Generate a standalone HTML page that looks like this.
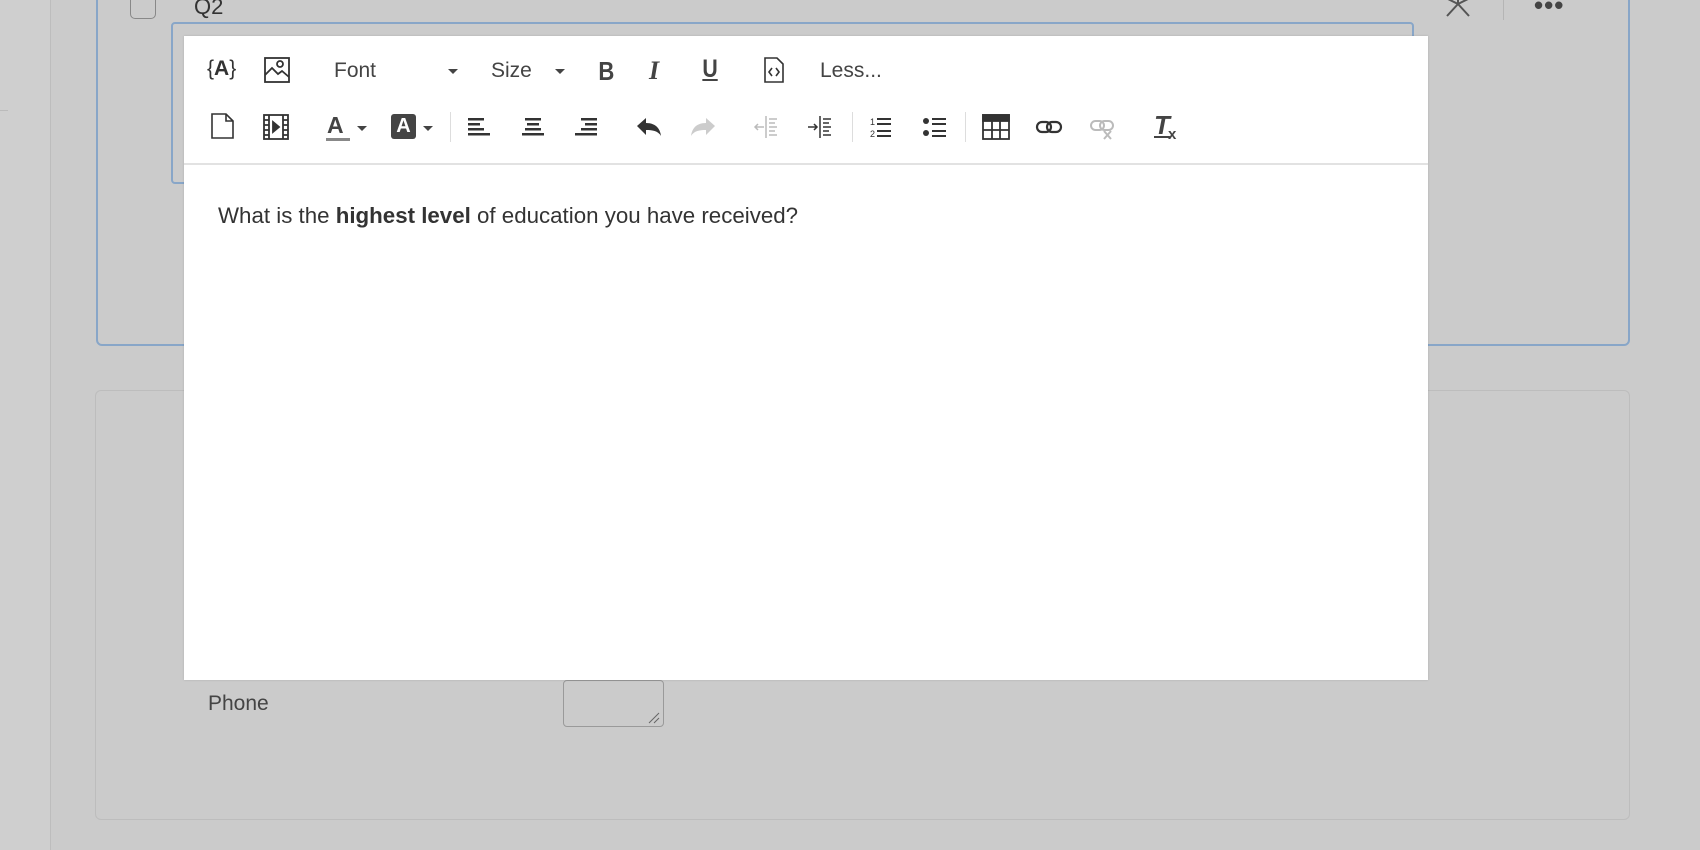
<!DOCTYPE html>
<html><head><meta charset="utf-8"><style>
*{margin:0;padding:0;box-sizing:border-box}
body{width:1700px;height:850px;overflow:hidden;background:#cbcbcb;font-family:"Liberation Sans",Arial,sans-serif;position:relative;color:#333}
.a{position:absolute}
.ic{position:absolute;width:28px;height:28px}
.t{position:absolute;font-size:20px;color:#444}
.car{position:absolute;width:0;height:0;border-left:5px solid transparent;border-right:5px solid transparent;border-top:5px solid #444}
.sep{position:absolute;width:1px;height:30px;background:#ddd;top:112px}
</style></head><body>
<div class="a" style="left:0;top:0;width:51px;height:850px;background:#cfcfcf;border-right:1px solid #bdbdbd"></div>
<div class="a" style="left:0;top:110px;width:8px;height:1px;background:#bbb"></div>
<!-- card 1 -->
<div class="a" style="left:96px;top:-10px;width:1534px;height:356px;border:2px solid #88a6c8;border-radius:6px;background:#cbcbcb"></div>
<div class="a" style="left:130px;top:-8px;width:26px;height:27px;border:1.5px solid #888;border-radius:5px"></div>
<div class="a" style="left:194px;top:-6px;font-size:22px;color:#333">Q2</div>
<svg class="a" style="left:1443px;top:-10px" width="30" height="28" viewBox="0 0 30 28" stroke="#555" stroke-width="2" fill="none"><path d="M15 0v14M15 14L4 26M15 14l11 12M15 14L3 8M15 14l12-6"/></svg>
<div class="a" style="left:1503px;top:0;width:1px;height:20px;background:#b5b5b5"></div>
<div class="a" style="left:1534px;top:-10px;font-size:26px;color:#444;letter-spacing:1px;font-weight:bold">•••</div>
<div class="a" style="left:171px;top:22px;width:1243px;height:162px;border:2px solid #88a6c8;border-radius:4px"></div>
<!-- card 2 -->
<div class="a" style="left:95px;top:390px;width:1535px;height:430px;border:1px solid #bdbdbd;border-radius:6px"></div>
<div class="a" style="left:208px;top:692px;font-size:21px;color:#444">Phone</div>
<div class="a" style="left:563px;top:680px;width:101px;height:47px;border:1px solid #9a9a9a;border-radius:4px"></div>
<svg class="a" style="left:648px;top:712px" width="12" height="12" stroke="#666" stroke-width="1"><path d="M1 11L11 1M6 11l5-5"/></svg>
<!-- editor -->
<div class="a" style="left:184px;top:36px;width:1244px;height:644px;background:#fff;box-shadow:0 0 2px rgba(0,0,0,.15)"></div>
<div class="a" style="left:184px;top:163px;width:1244px;height:2px;background:#e2e2e2"></div>
<div class="a" style="left:218px;top:203px;font-size:22.3px;color:#333">What is the <b>highest level</b> of education you have received?</div>
<!-- row1 -->
<div class="t" style="left:207px;top:57px;font-size:21px;color:#333">{<b>A</b>}</div>
<svg class="ic" style="left:263px;top:56px" viewBox="0 0 28 28" fill="none" stroke="#333" stroke-width="1.8"><rect x="2" y="2" width="24" height="24"/><path d="M2 19l7-7 6 6 4-3 7 6"/><circle cx="17" cy="8" r="3"/></svg>
<div class="t" style="left:334px;top:59px;font-size:21px">Font</div><div class="car" style="left:448px;top:69px"></div>
<div class="t" style="left:491px;top:59px;font-size:21px">Size</div><div class="car" style="left:555px;top:69px"></div>
<div class="t" style="left:597px;top:56px;font-size:26px;font-weight:bold;color:#444;transform:scaleX(.85)">B</div>
<div class="t" style="left:649px;top:56px;font-size:26px;font-weight:bold;font-style:italic;font-family:'Liberation Serif',serif;color:#444">I</div>
<div class="t" style="left:701px;top:55px;font-size:25px;font-weight:bold;text-decoration:underline;color:#444;transform:scaleX(.85)">U</div>
<svg class="ic" style="left:760px;top:56px" viewBox="0 0 28 28" fill="none" stroke="#333" stroke-width="1.6"><path d="M5 2h12l6 6v18H5z"/><path d="M12 12l-3 4 3 4M16 12l3 4-3 4"/></svg>
<div class="t" style="left:820px;top:59px;font-size:21px">Less...</div>
<!-- row2 -->
<svg class="ic" style="left:209px;top:112px" viewBox="0 0 28 28" fill="none" stroke="#333" stroke-width="1.6"><path d="M3 2h14l7 7v17H3z"/><path d="M17 2v7h7"/></svg>
<svg class="ic" style="left:262px;top:113px" viewBox="0 0 28 28" fill="none" stroke="#333" stroke-width="1.8"><rect x="2" y="2" width="24" height="24"/><path d="M7 2v24M21 2v24M2 7h5M2 12h5M2 17h5M2 22h5M21 7h5M21 12h5M21 17h5M21 22h5"/><path d="M11 9l6 5-6 5z" fill="#333"/></svg>
<div class="t" style="left:327px;top:112px;font-size:23px;font-weight:bold">A</div>
<div class="a" style="left:326px;top:138px;width:24px;height:3px;background:#888"></div>
<div class="car" style="left:357px;top:126px"></div>
<div class="a" style="left:391px;top:114px;width:25px;height:25px;background:#444;border-radius:3px;color:#fff;font-weight:bold;font-size:20px;text-align:center;line-height:25px">A</div>
<div class="car" style="left:423px;top:126px"></div>
<div class="sep" style="left:450px"></div>
<svg class="ic" style="left:465px;top:113px" viewBox="0 0 28 28" fill="#333"><rect x="3" y="5" width="16" height="2.5"/><rect x="3" y="10" width="12" height="2.5"/><rect x="3" y="15" width="16" height="2.5"/><rect x="3" y="20" width="22" height="2.5"/></svg>
<svg class="ic" style="left:519px;top:113px" viewBox="0 0 28 28" fill="#333"><rect x="6" y="5" width="16" height="2.5"/><rect x="8" y="10" width="12" height="2.5"/><rect x="6" y="15" width="16" height="2.5"/><rect x="3" y="20" width="22" height="2.5"/></svg>
<svg class="ic" style="left:572px;top:113px" viewBox="0 0 28 28" fill="#333"><rect x="9" y="5" width="16" height="2.5"/><rect x="13" y="10" width="12" height="2.5"/><rect x="9" y="15" width="16" height="2.5"/><rect x="3" y="20" width="22" height="2.5"/></svg>
<svg class="ic" style="left:635px;top:113px" viewBox="0 0 28 28" fill="#333"><path d="M2 13l9-8v5c8 0 14 4 15 13-3-5-8-6-15-6v5z"/></svg>
<svg class="ic" style="left:689px;top:113px" viewBox="0 0 28 28" fill="#ccc"><path d="M26 13l-9-8v5c-8 0-14 4-15 13 3-5 8-6 15-6v5z"/></svg>
<svg class="ic" style="left:752px;top:113px" viewBox="0 0 28 28" stroke="#bbb" stroke-width="1.5" fill="none"><path d="M14 3v22M17 6h8M17 10h6M17 14h8M17 18h6M17 22h8M12 14H3M6 11l-3 3 3 3"/></svg>
<svg class="ic" style="left:806px;top:113px" viewBox="0 0 28 28" stroke="#333" stroke-width="1.5" fill="none"><path d="M14 3v22M17 6h8M17 10h6M17 14h8M17 18h6M17 22h8M2 14h9M8 11l3 3-3 3"/></svg>
<div class="sep" style="left:852px"></div>
<svg class="ic" style="left:867px;top:113px" viewBox="0 0 28 28" fill="#333"><text x="3" y="12" font-size="9" font-family="Liberation Sans">1</text><text x="3" y="24" font-size="9" font-family="Liberation Sans">2</text><rect x="10" y="5" width="14" height="2"/><rect x="10" y="10" width="14" height="2"/><rect x="10" y="17" width="14" height="2"/><rect x="10" y="22" width="14" height="2"/></svg>
<svg class="ic" style="left:921px;top:113px" viewBox="0 0 28 28" fill="#333"><circle cx="5" cy="8" r="3"/><circle cx="5" cy="20" r="3"/><rect x="11" y="5" width="14" height="2"/><rect x="11" y="10" width="14" height="2"/><rect x="11" y="17" width="14" height="2"/><rect x="11" y="22" width="14" height="2"/></svg>
<div class="sep" style="left:965px"></div>
<svg class="ic" style="left:982px;top:113px" viewBox="0 0 28 28" fill="none" stroke="#333" stroke-width="1.8"><rect x="1" y="2" width="26" height="24"/><rect x="1" y="2" width="26" height="6" fill="#333"/><path d="M1 17h26M10 8v18M18 8v18"/></svg>
<svg class="ic" style="left:1035px;top:113px" viewBox="0 0 28 28" fill="none" stroke="#333" stroke-width="2.2"><rect x="2" y="9" width="14" height="10" rx="5"/><rect x="12" y="9" width="14" height="10" rx="5"/></svg>
<svg class="ic" style="left:1089px;top:113px" viewBox="0 0 28 28" fill="none" stroke="#bbb" stroke-width="2"><rect x="2" y="8" width="13" height="9" rx="4.5"/><rect x="11" y="8" width="13" height="9" rx="4.5"/><path d="M15 18l7 8M22 18l-7 8"/></svg>
<div class="t" style="left:1154px;top:110px;font-size:26px;font-weight:bold;font-style:italic;text-decoration:underline;color:#444">T</div>
<div class="t" style="left:1168px;top:126px;font-size:15px;font-weight:bold;color:#444">x</div>
</body></html>
